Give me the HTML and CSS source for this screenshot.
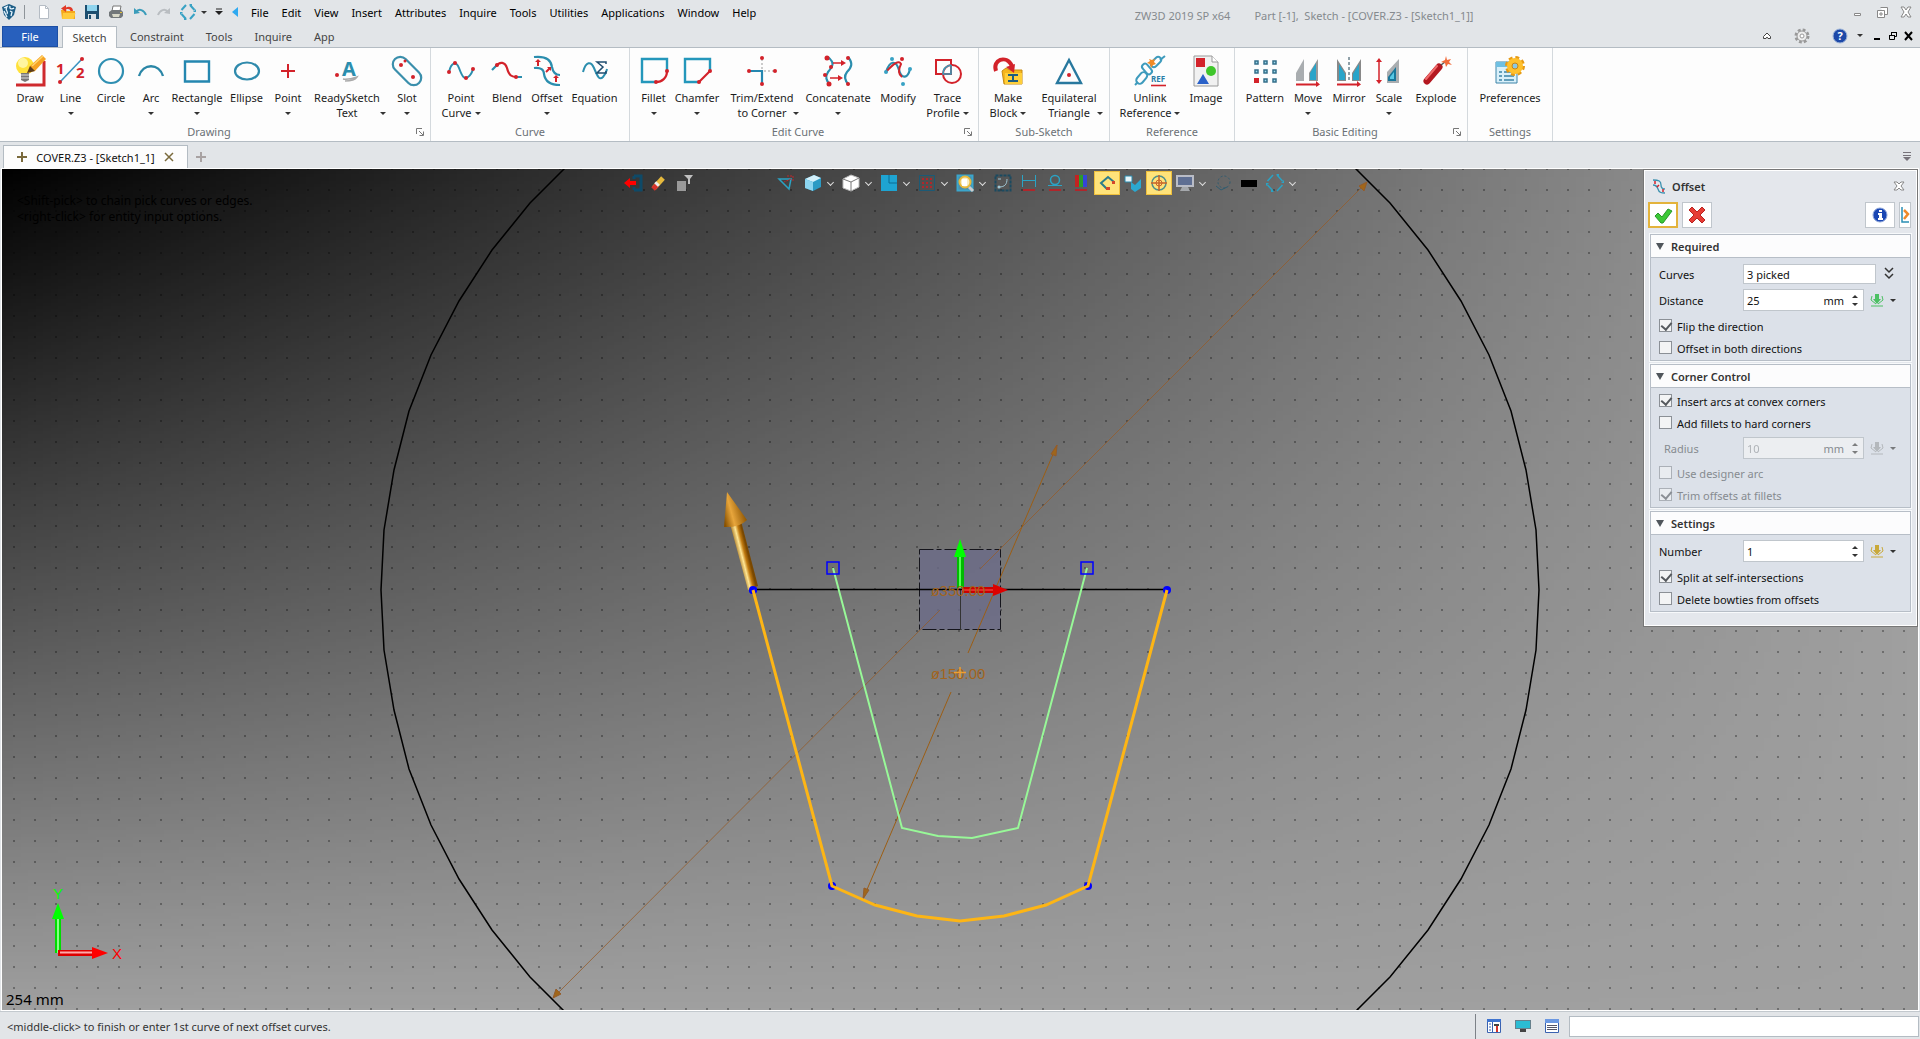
FILE: index.html
```html
<!DOCTYPE html>
<html lang="en">
<head>
    <meta charset="UTF-8">
    <meta name="viewport" content="width=device-width, initial-scale=1.0">
    <title>ZW3D 2019 SP x64</title>
    <link rel="stylesheet" href="styles.css">
</head>
<body>
    <!-- Title bar -->
    <header class="titlebar">
        <div class="quick">
            <span class="logo"><svg width="16" height="18" viewBox="0 0 16 18"><path d="M1 4l7-3 7 3-2 8-5 5-5-5z" fill="#1c5d86"/><path d="M3 5l4-2M6 4c-3 4 2 3 0 7M9 3c-1 4 3 3 4 2M9 8l2 1-1 4M3 8l3 6" stroke="#e8f6ff" stroke-width="1.3" fill="none"/></svg></span>
            <span class="divider"></span>
            <button class="qbtn" aria-label="New"><svg width="16" height="16"><path d="M3.500 1.500h6l3 3v10h-9z" fill="#fff" stroke="#b5bcc4"/><path d="M9.500 1.500v3h3" fill="none" stroke="#b5bcc4"/></svg></button>
            <button class="qbtn" aria-label="Open"><svg width="16" height="16"><path d="M1 6h5l1 1h8v8H2z" fill="#f5a81c"/><path d="M3 9h12.500l-2 6H2z" fill="#ffcb3d"/><path d="M13 7c0-4-4-5-7-3.500V1L1 4.500 6 8V5.500c3-1 4 0 4.500 1.500z" fill="#e23a28"/></svg></button>
            <button class="qbtn" aria-label="Save"><svg width="16" height="16"><path d="M1 1h14v14H1z" fill="#1d4f70"/><path d="M3 1h10v6H3z" fill="#8fd4ee"/><path d="M4 10h8v5H4z" fill="#d9e2e8"/><path d="M5 11h2v4H5z" fill="#1d4f70"/></svg></button>
            <button class="qbtn" aria-label="Print"><svg width="16" height="16"><path d="M5 2h8l-1 5H4z" fill="#fff" stroke="#777"/><path d="M1 8l3-2h9l2 2v4l-2 2H3l-2-2z" fill="#72777a"/><path d="M4 10h8l-1 3H5z" fill="#d8d8c8"/><path d="M12 8h2v1h-2z" fill="#e2c03a"/></svg></button>
            <button class="qbtn" aria-label="Undo"><svg width="16" height="16"><path d="M4 8c3-4 8-2 10 3" fill="none" stroke="#3a9cba" stroke-width="2"/><path d="M2 4v6l6-1z" fill="#3a9cba"/></svg></button>
            <button class="qbtn" aria-label="Redo"><svg width="16" height="16"><path d="M12 8C9 4 4 6 2 11" fill="none" stroke="#b9bdc1" stroke-width="2"/><path d="M14 4v6l-6-1z" fill="#b9bdc1"/></svg></button>
            <button class="qbtn" aria-label="Regenerate"><svg width="16" height="16"><path d="M6 1L1.500 6M10 1l4.500 5M14.500 10L10 15M6 15l-4.500-5" fill="none" stroke="#38a2c4" stroke-width="2"/><path d="M9 0h3v3zM16 5v3h-3zM7 16H4v-3zM0 11V8h3z" fill="#38a2c4"/></svg></button>
            <span class="caret"></span>
            <button class="qsmall" aria-label="Customize toolbar"><svg width="8" height="8"><path d="M1 1h6" stroke="#222" stroke-width="1"/><path d="M0 3h8L4 7z" fill="#222"/></svg></button>
            <button class="qsmall" aria-label="Collapse menu"><svg width="8" height="12"><path d="M7 1v10L1 6z" fill="#2fa9f0"/></svg></button>
        </div>
        <nav class="menu">
            <button>File</button><button>Edit</button><button>View</button><button>Insert</button><button>Attributes</button><button>Inquire</button><button>Tools</button><button>Utilities</button><button>Applications</button><button>Window</button><button>Help</button>
        </nav>
        <div class="title"><span>ZW3D 2019 SP x64</span><span>Part [-1],&nbsp; Sketch - [COVER.Z3 - [Sketch1_1]]</span></div>
        <div class="window-controls">
            <button aria-label="Minimize"><svg width="12" height="12"><path d="M2.500 7.500h6v2h-6z" fill="#fff" stroke="#888"/></svg></button>
            <button aria-label="Restore"><svg width="12" height="12"><path d="M4.500 1.500h7v7h-3M1.500 4.500h7v7h-7zM4 7h2v2H4z" fill="#fff" stroke="#888"/></svg></button>
            <button aria-label="Close"><svg width="12" height="12"><path d="M1 1h3l2 3 2-3h3L8 6l3 5H8L6 8l-2 3H1l3-5z" fill="#fff" stroke="#888"/></svg></button>
        </div>
    </header>

    <!-- Ribbon tabs -->
    <div class="tabs">
        <button class="tab tab-file">File</button>
        <button class="tab tab-active">Sketch</button>
        <button class="tab">Constraint</button>
        <button class="tab">Tools</button>
        <button class="tab">Inquire</button>
        <button class="tab">App</button>
        <div class="tab-tools">
            <button class="wide" aria-label="Minimize ribbon"><svg width="10" height="10"><path d="M1.500 5.500L5 2l3.500 3.500v2H6L5 6 4 7.500H1.500z" fill="#fff" stroke="#444"/></svg></button>
            <button class="wide" aria-label="Options"><svg width="16" height="16"><circle cx="8" cy="8" r="6" fill="none" stroke="#999" stroke-width="3" stroke-dasharray="2.700 2"/><circle cx="8" cy="8" r="5" fill="#eee" stroke="#999"/><circle cx="8" cy="8" r="2" fill="#fff" stroke="#999"/></svg></button>
            <button aria-label="Help"><svg width="16" height="16"><circle cx="8" cy="8" r="7" fill="#1d49a8" stroke="#9db4d9"/><text x="8" y="12" text-anchor="middle" class="help-mark">?</text></svg></button>
            <span class="caret"></span>
            <button aria-label="Minimize document"><svg width="10" height="10"><path d="M2 7h6v2H2z"/></svg></button>
            <button aria-label="Restore document"><svg width="10" height="10"><path d="M3.500 4V1.500h5v4H7M1.500 4.500h5v4h-5z" fill="none" stroke="#000"/><path d="M3 1h6v1H3zM1 4h6v1H1z"/></svg></button>
            <button aria-label="Close document"><svg width="10" height="10"><path d="M1 1l7 8M8 1L1 9" stroke="#000" stroke-width="2"/></svg></button>
        </div>
    </div>

    <!-- Ribbon -->
    <section class="ribbon">
        <div class="group with-launcher">
            <div class="tools tools-drawing">
                <button class="tool"><svg viewBox="0 0 32 32"><path d="M2 30h28V6" fill="none" stroke="#cf2a2e" stroke-width="3"/><circle cx="11" cy="11" r="9" fill="#ffe13a"/><circle cx="9" cy="8" r="5" fill="#fff5a0"/><path d="M7 18h8v7l-4 2-4-2z" fill="#777"/><path d="M7 20h8M7 23h8" stroke="#ddd"/><path d="M13 18l3-7L28 0l4 4-11 12z" fill="#f6a223"/><path d="M13 18l3-7 5 5z" fill="#5b3c1d"/><path d="M18 11L29 1" stroke="#ffd56c" stroke-width="1.500"/></svg><span>Draw</span></button>
                <button class="tool"><svg viewBox="0 0 32 32"><path d="M5 27L27 4" stroke="#3a93c0" stroke-width="1.600"/><circle cx="5" cy="27" r="2" fill="#d3222a"/><circle cx="27" cy="4" r="2" fill="#d3222a"/><text x="1" y="19" class="digit">1</text><text x="21" y="23" class="digit">2</text></svg><span>Line</span><i class="caret"></i></button>
                <button class="tool"><svg viewBox="0 0 32 32"><circle cx="16" cy="16" r="12" fill="none" stroke="#2f8fb2" stroke-width="2.200"/></svg><span>Circle</span></button>
                <button class="tool"><svg viewBox="0 0 32 32"><path d="M4 21c4-13 20-13 24 0" fill="none" stroke="#2a86a6" stroke-width="2.400"/></svg><span>Arc</span><i class="caret"></i></button>
                <button class="tool"><svg viewBox="0 0 32 32"><path d="M4 6.500h24v20H4z" fill="none" stroke="#2487b0" stroke-width="2.400"/></svg><span>Rectangle</span><i class="caret"></i></button>
                <button class="tool"><svg viewBox="0 0 32 32"><ellipse cx="16" cy="16" rx="12" ry="8.500" fill="none" stroke="#2f8aac" stroke-width="2.200"/></svg><span>Ellipse</span></button>
                <button class="tool"><svg viewBox="0 0 32 32"><path d="M9 16h14M16 9v14" stroke="#d3222a" stroke-width="2"/></svg><span>Point</span><i class="caret"></i></button>
                <button class="tool"><svg viewBox="0 0 32 32"><circle cx="6" cy="20" r="2" fill="#d3222a"/><text x="11" y="21" class="letter">A</text><path d="M12 24c5 1 8 0 14-2-2 3-8 4-12 4" fill="none" stroke="#aaa" stroke-width="1.500"/></svg><span>ReadySketch</span><span>Text</span><i class="caret side"></i></button>
                <button class="tool"><svg viewBox="0 0 32 32"><rect x="-1" y="8.500" width="34" height="15" rx="7.500" transform="rotate(45 16 16)" fill="none" stroke="#3a8fac" stroke-width="2.200"/><circle cx="10" cy="10" r="2" fill="#d3222a"/><circle cx="14" cy="6" r="1.500" fill="#d3222a"/><circle cx="22" cy="22" r="2" fill="#d3222a"/></svg><span>Slot</span><i class="caret"></i></button>
            </div>
            <div class="group-name">Drawing</div>
            <button class="launcher" aria-label="Drawing options"><svg width="8" height="8"><path d="M.500 6V.500H6M3 3l4 4M7.500 3.500v4h-4" fill="none" stroke="#777"/></svg></button>
        </div>
        <div class="group">
            <div class="tools tools-curve">
                <button class="tool"><svg viewBox="0 0 32 32"><path d="M4 17C6 8 11 5 14 13s5 12 9 9c3-2 4-4 5-8" fill="none" stroke="#2b8eae" stroke-width="2"/><circle cx="4" cy="17" r="2" fill="#d3222a"/><circle cx="10" cy="8" r="2" fill="#d3222a"/><circle cx="21" cy="23" r="2" fill="#d3222a"/><circle cx="28" cy="14" r="2" fill="#d3222a"/></svg><span>Point</span><span>Curve<i class="caret inline"></i></span></button>
                <button class="tool"><svg viewBox="0 0 32 32"><path d="M1 15l5-5M25 22h6" stroke="#2b8eae" stroke-width="2.200"/><path d="M5 11c4-5 9-4 11 2 2 8 5 9 10 9" fill="none" stroke="#d3222a" stroke-width="2.200"/><circle cx="6" cy="10" r="2" fill="#d3222a"/><circle cx="25" cy="22" r="2" fill="#d3222a"/></svg><span>Blend</span></button>
                <button class="tool"><svg viewBox="0 0 32 32"><path d="M3 2c10-1 17 2 18 10 1 6 4 8 8 8M3 13c7-1 10 2 10 6 1 7 6 11 16 11" fill="none" stroke="#2b8eae" stroke-width="2.200"/><path d="M7 11V6M15 17l4-4M25 27v-5" stroke="#d3222a" stroke-width="2"/><path d="M4 7l3-3 3 3zM22 23l3-3 3 3zM16 12h4v4z" fill="#d3222a"/></svg><span>Offset</span><i class="caret"></i></button>
                <button class="tool"><svg viewBox="0 0 32 32"><path d="M4 17C7 6 12 6 15 13s5 13 9 9c3-3 3-4 4-8" fill="none" stroke="#2b8eae" stroke-width="2"/><path d="M27 9V7h-9l6 5-6 6h9v-2" fill="none" stroke="#1f4d70" stroke-width="1.500"/></svg><span>Equation</span></button>
            </div>
            <div class="group-name">Curve</div>
        </div>
        <div class="group with-launcher">
            <div class="tools tools-edit">
                <button class="tool"><svg viewBox="0 0 32 32"><path d="M29 15V4H4v23h14" fill="none" stroke="#2497bb" stroke-width="2.400"/><path d="M29 16c0 7-5 11-11 11" fill="none" stroke="#d3222a" stroke-width="2.200"/><circle cx="29" cy="16" r="2" fill="#d3222a"/><circle cx="18" cy="27" r="2" fill="#d3222a"/></svg><span>Fillet</span><i class="caret"></i></button>
                <button class="tool"><svg viewBox="0 0 32 32"><path d="M29 15V4H4v23h14" fill="none" stroke="#2497bb" stroke-width="2.400"/><path d="M29 16L18 27" stroke="#d3222a" stroke-width="2.200"/><circle cx="29" cy="16" r="2" fill="#d3222a"/><circle cx="18" cy="27" r="2" fill="#d3222a"/></svg><span>Chamfer</span><i class="caret"></i></button>
                <button class="tool"><svg viewBox="0 0 32 32"><path d="M4 16h12v12" fill="none" stroke="#2487b0" stroke-width="2.200"/><path d="M16 14V4M18 16h10" stroke="#bbb" stroke-width="1.500" stroke-dasharray="2 2"/><circle cx="3" cy="16" r="2" fill="#d3222a"/><circle cx="16" cy="3" r="2" fill="#d3222a"/><circle cx="29" cy="16" r="2" fill="#d3222a"/><circle cx="16" cy="29" r="2" fill="#d3222a"/></svg><span>Trim/Extend</span><span>to Corner</span><i class="caret side"></i></button>
                <button class="tool"><svg viewBox="0 0 32 32"><path d="M6 2c7 6 5 9 0 15-3 5-2 8 2 13M26 2c5 6 4 10-1 15-4 5-2 9 2 13" fill="none" stroke="#2b8eae" stroke-width="2.200"/><path d="M11 8h9M8 23h9" stroke="#d3222a" stroke-width="1.600"/><path d="M19 5l5 3-5 3zM16 20l5 3-5 3z" fill="#d3222a"/><circle cx="5" cy="3" r="2.500" fill="#d3222a"/><circle cx="9" cy="12" r="2" fill="#d3222a"/><circle cx="3" cy="20" r="2" fill="#d3222a"/><circle cx="7" cy="29" r="2.500" fill="#d3222a"/><circle cx="26" cy="3" r="2" fill="#d3222a"/><circle cx="26" cy="29" r="2" fill="#d3222a"/></svg><span>Concatenate</span><i class="caret"></i></button>
                <button class="tool"><svg viewBox="0 0 32 32"><path d="M4 17c4-12 10-12 13-2s9 8 11-1" fill="none" stroke="#2b8eae" stroke-width="2.200"/><path d="M4 17c8-9 13-12 15-8-3 6-3 10 1 13" fill="none" stroke="#d3222a" stroke-width="2"/><circle cx="4" cy="17" r="2" fill="#38a2c4"/><circle cx="10" cy="4" r="2" fill="#38a2c4"/><circle cx="21" cy="29" r="2" fill="#38a2c4"/><circle cx="28" cy="14" r="2" fill="#38a2c4"/><circle cx="20" cy="4" r="2" fill="#d3222a"/></svg><span>Modify</span></button>
                <button class="tool"><svg viewBox="0 0 32 32"><path d="M4 5h15v14H4z" fill="none" stroke="#d3222a" stroke-width="2"/><circle cx="20" cy="19" r="9" fill="none" stroke="#d3222a" stroke-width="2"/><path d="M19 10v9h-8c0-5 3-8 8-9" fill="none" stroke="#3a9cba" stroke-width="1.600"/></svg><span>Trace</span><span>Profile<i class="caret inline"></i></span></button>
            </div>
            <div class="group-name">Edit Curve</div>
            <button class="launcher" aria-label="Edit curve options"><svg width="8" height="8"><path d="M.500 6V.500H6M3 3l4 4M7.500 3.500v4h-4" fill="none" stroke="#777"/></svg></button>
        </div>
        <div class="group">
            <div class="tools tools-block">
                <button class="tool"><svg viewBox="0 0 32 32"><path d="M10 16l4-3 4 2h12v14H12z" fill="#f6b51d" stroke="#c68a12"/><path d="M13 18h17v11H13z" fill="#ffcf3a"/><path d="M16 20h10M16 26h10M21 20v6" stroke="#1f5d80" stroke-width="2"/><path d="M4 16C0 5 14-1 20 11" fill="none" stroke="#d3222a" stroke-width="4"/><path d="M14 12l9-3-1 9z" fill="#d3222a"/></svg><span>Make</span><span>Block<i class="caret inline"></i></span></button>
                <button class="tool"><svg viewBox="0 0 32 32"><path d="M16 5l12 23H4z" fill="none" stroke="#28789e" stroke-width="2.400"/><circle cx="16" cy="20" r="2" fill="#d3222a"/></svg><span>Equilateral</span><span>Triangle</span><i class="caret side"></i></button>
            </div>
            <div class="group-name">Sub-Sketch</div>
        </div>
        <div class="group">
            <div class="tools tools-reference">
                <button class="tool"><svg viewBox="0 0 32 32"><g fill="none" stroke="#3e9bbd" stroke-width="2"><rect x="1" y="20" width="13" height="7" rx="3.500" transform="rotate(-50 7 23)"/><rect x="7" y="11" width="12" height="6" rx="3" transform="rotate(50 13 14)"/><rect x="16" y="4" width="12" height="6" rx="3" transform="rotate(-45 22 7)"/><path d="M26 5l5-4M1 30l3-3"/></g><path d="M15 4l3 1 3-1-1 3 2 2-3 1-2 3-1-4-3-1 3-2z" fill="#f28a25"/><text x="17" y="27" class="ref">REF</text><path d="M17 30.500h15" stroke="#d3222a" stroke-width="1.600"/></svg><span>Unlink</span><span>Reference<i class="caret inline"></i></span></button>
                <button class="tool"><svg viewBox="0 0 32 32"><path d="M4 1h18l6 6v24H4z" fill="#f1f1f1" stroke="#999"/><path d="M22 1v6h6" fill="#fff" stroke="#999"/><path d="M6 3h9v9H6z" fill="#d3222a"/><circle cx="21" cy="16" r="5" fill="#3fc62b"/><path d="M13 19l6 10H7z" fill="#2b62c9"/></svg><span>Image</span></button>
            </div>
            <div class="group-name">Reference</div>
        </div>
        <div class="group with-launcher">
            <div class="tools tools-basic">
                <button class="tool"><svg viewBox="0 0 32 32"><g fill="#9fdcef" stroke="#356f8a" stroke-width="1.500"><path d="M6 6h3v3H6zM15 6h3v3h-3zM24 6h3v3h-3zM6 15h3v3H6zM15 15h3v3h-3zM24 15h3v3h-3zM15 24h3v3h-3zM24 24h3v3h-3z"/></g><path d="M5 23h5v5H5z" fill="#d3222a"/></svg><span>Pattern</span></button>
                <button class="tool"><svg viewBox="0 0 32 32"><path d="M4 26V18L12 4v22z" fill="#a9adb0"/><path d="M17 26V18l9-14v22z" fill="#999"/><path d="M18 25v-7l6-10v17z" fill="#29a4c9"/><path d="M4 29.500h22" stroke="#d3222a" stroke-width="2"/><path d="M24 26l4 3.500-4 2.500z" fill="#d3222a"/></svg><span>Move</span><i class="caret"></i></button>
                <button class="tool"><svg viewBox="0 0 32 32"><path d="M4 26V4l9 14v8zM28 26V4l-9 14v8z" fill="#888"/><path d="M6 25V9l6 10v6zM26 25V9l-6 10v6z" fill="#29a4c9"/><path d="M16 2v24" stroke="#245" stroke-dasharray="3 2"/><path d="M4 29.500h22" stroke="#d3222a" stroke-width="2"/><path d="M24 26l4 3.500-4 2.500z" fill="#d3222a"/></svg><span>Mirror</span></button>
                <button class="tool"><svg viewBox="0 0 32 32"><path d="M6 5v21" stroke="#d3222a" stroke-width="1.500"/><path d="M3 7l3-4 3 4zM3 25l3 4 3-4z" fill="#d3222a"/><path d="M14 28V17L26 4v24z" fill="#a9adb0"/><path d="M15 26v-4l8-10v14z" fill="#18779b"/><path d="M17 24v-2l4-5v7z" fill="#57c8e5"/></svg><span>Scale</span><i class="caret"></i></button>
                <button class="tool"><svg viewBox="0 0 32 32"><path d="M7 26L19 12" stroke="#b41820" stroke-width="7" stroke-linecap="round"/><path d="M6 24L17 11" stroke="#f06a6a" stroke-width="2" stroke-linecap="round"/><path d="M21 10l4-3" stroke="#555" stroke-width="1.500"/><path d="M26 1l1 4 4-1-2 3 3 3-4-1-2 3-1-4-4-1 4-2z" fill="#f26b3a"/></svg><span>Explode</span></button>
            </div>
            <div class="group-name">Basic Editing</div>
            <button class="launcher" aria-label="Basic editing options"><svg width="8" height="8"><path d="M.500 6V.500H6M3 3l4 4M7.500 3.500v4h-4" fill="none" stroke="#777"/></svg></button>
        </div>
        <div class="group">
            <div class="tools tools-settings">
                <button class="tool"><svg viewBox="0 0 32 32"><path d="M2 7h21v21H2z" fill="#d9f0fa" stroke="#3d84a8"/><path d="M2 7h21v5H2z" fill="#6fc0e2"/><path d="M5 17h3M10 17h10M5 21h3M10 21h10M5 25h3M10 25h10" stroke="#3d84a8" stroke-width="1.500"/><circle cx="21" cy="11" r="8" fill="none" stroke="#e69a14" stroke-width="4" stroke-dasharray="3.600 2.700"/><circle cx="21" cy="11" r="5.500" fill="none" stroke="#ffc02c" stroke-width="5"/><circle cx="21" cy="11" r="3" fill="#8cc8e0" stroke="#c98512"/></svg><span>Preferences</span></button>
            </div>
            <div class="group-name">Settings</div>
        </div>
    </section>

    <!-- Document tabs -->
    <div class="doc-tabs">
        <button class="doc-tab"><svg width="10" height="10"><path d="M0 5h10M5 0v10" stroke="#7a6a3c" stroke-width="2"/></svg>COVER.Z3 - [Sketch1_1]<svg width="10" height="10"><path d="M1 1l8 8M9 1L1 9" stroke="#7a6a3c" stroke-width="1.500"/></svg></button>
        <button class="doc-add" aria-label="New tab"><svg width="10" height="10"><path d="M0 5h10M5 0v10" stroke="#a8a2a2" stroke-width="2"/></svg></button>
        <button class="doc-list" aria-label="Tab list"><svg width="10" height="10"><path d="M1 .500h8M1 3.500h8" stroke="#77737a"/><path d="M1 5h8L5 9z" fill="#77737a"/></svg></button>
    </div>

    <!-- Sketch canvas -->
    <main class="canvas">
        <div class="shade"></div>
        <svg class="drawing" viewBox="2 169 1916 841" preserveAspectRatio="xMidYMid slice">
            <defs>
                <pattern id="grid" x="3" y="11" width="21" height="21" patternUnits="userSpaceOnUse"><rect x="10" y="10" width="2" height="2" fill="#000" opacity=".3"/></pattern>
                <linearGradient id="shaft" gradientUnits="userSpaceOnUse" x1="736" y1="557" x2="748" y2="554"><stop offset="0" stop-color="#8a5200"/><stop offset=".5" stop-color="#ffe694"/><stop offset=".75" stop-color="#c07a10"/><stop offset="1" stop-color="#7a4800"/></linearGradient>
                <linearGradient id="head" gradientUnits="userSpaceOnUse" x1="724" y1="520" x2="746" y2="514"><stop offset="0" stop-color="#8a5200"/><stop offset=".4" stop-color="#e8a63c"/><stop offset="1" stop-color="#8a5200"/></linearGradient>
            </defs>
            <rect x="2" y="169" width="1916" height="841" fill="url(#grid)"/>
            <g fill="none" stroke="#000" stroke-width="1.500">
                <path d="M1347 160L1390 203L1428 250L1461 301L1489 355L1511 411L1526 470L1536 530L1539 590L1536 650L1526 710L1511 769L1489 825L1461 879L1428 930L1390 977L1347 1020"/>
                <path d="M573 160L530 203L492 250L459 301L431 355L409 411L394 470L384 530L381 590L384 650L394 710L409 769L431 825L459 879L492 930L530 977L573 1020"/>
            </g>
            <!-- construction plane -->
            <rect x="919.500" y="549.500" width="81" height="80" fill="#6c6b88" fill-opacity=".8" stroke="#15151c" stroke-dasharray="14 3 5 3"/>
            <path d="M960.500 590v40" stroke="#333"/>
            <path d="M753 589.500h414" stroke="#000" stroke-width="1.500"/>
            <!-- diameter dimensions -->
            <g stroke="#935c2c">
                <path d="M1367 182L980 569M940 610L553 998" stroke-opacity=".8"/>
                <path d="M1057 445L968 653M951 692L863 899" stroke="#9c5e14"/>
                <path d="M1367 182l-3 9-5-5zM553 998l3-9 5 5zM1057 445l-1 11-5-2zM863 899l1-11 5 2z" fill="#a0661a"/>
            </g>
            <!-- origin axes -->
            <path d="M957 588v-32h7v32z" fill="#0b0"/><path d="M960 588v-32" stroke="#5f5" stroke-width="2"/><path d="M960 539l6 18h-12z" fill="#0f0"/>
            <path d="M962 587h32v6h-32z" fill="#c00"/><path d="M962 590h32" stroke="#f55"/><path d="M1008 590l-15 6v-12z" fill="#d00"/>
            <g class="dim">
                <text x="931" y="596"><tspan class="dia">ø</tspan>350.00</text>
                <text x="931" y="679"><tspan class="dia">ø</tspan>150.00</text>
            </g>
            <path d="M954 672.500h12M960 667v11" stroke="#f0a030" stroke-width="1.500"/>
            <!-- offset result -->
            <path d="M833 568L902 828L938 836L972 838L1018 828L1087 568" fill="none" stroke="#98f898" stroke-width="2"/>
            <g fill="none" stroke="#00f" stroke-width="1.500"><rect x="827" y="562" width="12" height="12"/><rect x="1081" y="562" width="12" height="12"/></g>
            <!-- picked curves and direction arrow -->
            <g fill="#00f"><circle cx="753" cy="590" r="4"/><circle cx="1167" cy="590" r="4"/><circle cx="832" cy="886" r="4"/><circle cx="1088" cy="886" r="4"/></g>
            <path d="M730 524l11-3 17 65-10 4z" fill="url(#shaft)"/>
            <path d="M727 492l20 28q-8 8-23 7z" fill="url(#head)"/>
            <circle cx="753" cy="590" r="4" fill="#00f"/>
            <path d="M753 590L832 886L875 905L917 916L960 921L1004 916L1046 905L1088 886L1167 590" fill="none" stroke="#fdb515" stroke-width="3"/>
            <!-- view triad -->
            <path d="M55 953v-38h6v38z" fill="#0d0"/><path d="M58 953v-38" stroke="#8f8" stroke-width="2"/><path d="M58 903l6 16H52z" fill="#0f0"/>
            <path d="M58 950h36v6H58z" fill="#d00"/><path d="M60 952.500h34" stroke="#faa" stroke-width="2"/><path d="M108 953l-16 6v-12z" fill="#f00"/>
            <text x="58" y="899" class="axis" fill="#0f0">Y</text>
            <text x="117" y="959" class="axis" fill="#f00">X</text>
        </svg>
        <p class="hint">&lt;Shift-pick&gt; to chain pick curves or edges.<br>&lt;right-click&gt; for entity input options.</p>
        <div class="scale">254 mm</div>

        <div class="view-bar">
            <button aria-label="Exit sketch"><svg width="18" height="18"><path d="M10 2h7v14h-7M10 2v3M10 16v-3" fill="none" stroke="#0e4a68" stroke-width="3"/><path d="M0 9l6-5v3h6v4H6v3z" fill="#f00"/></svg></button>
            <button aria-label="Erase"><svg width="18" height="18"><path d="M4 14l9-10" stroke="#e5b93d" stroke-width="5"/><path d="M3 15l4-4" stroke="#d6332b" stroke-width="5"/><path d="M6 11l2-2" stroke="#eee" stroke-width="5"/></svg></button>
            <button aria-label="Filter"><svg width="18" height="18"><path d="M1 7h9v10H1z" fill="#9a9a9a"/><path d="M8 1h9l-3 4v5h-2V5z" fill="#c0c0c0"/></svg></button>
            <span class="view-gap"></span>
            <button aria-label="Sketch plane"><svg width="18" height="18"><path d="M1 5h12L11 15z" fill="none" stroke="#2ba3c4" stroke-width="1.500"/><path d="M9 2h6v5M13 5l-7 3" fill="none" stroke="#c0262b" stroke-dasharray="2 1"/></svg></button>
            <button aria-label="Shaded"><svg width="18" height="18"><path d="M1 5l9-4 7 3v9l-8 4-8-3z" fill="#2b9ac4"/><path d="M1 5l9-4 7 3-8 4z" fill="#d3f0fb"/><path d="M1 5l8 3v9l-8-3z" fill="#8bd4ef"/></svg></button><i class="chev"></i>
            <button aria-label="Display mode"><svg width="18" height="18"><path d="M1 5l8-4 8 3v9l-8 4-8-3z" fill="#fff" stroke="#bbb"/><path d="M1 5l8 3 8-4M9 8v9" fill="none" stroke="#777"/></svg></button><i class="chev"></i>
            <button aria-label="Section view"><svg width="18" height="18"><path d="M1 1h16v16H1z" fill="#1ea4d2"/><path d="M9 1v8h8" fill="none" stroke="#0b6d94"/></svg></button><i class="chev"></i>
            <button aria-label="Grid"><svg width="18" height="18"><path d="M1.500 1.500h15v15h-15z" fill="none" stroke="#1b5a76"/><path d="M4 5h10M4 9h10M4 13h10" stroke="#b0262b" stroke-width="2" stroke-dasharray="2 2"/></svg></button><i class="chev"></i>
            <button aria-label="Zoom"><svg width="18" height="18"><path d="M1.500 1.500h15v15h-15z" fill="#4f8fa8" stroke="#3ba6cc" stroke-width="2"/><circle cx="9" cy="8" r="5.500" fill="#f8edc4" stroke="#e8b83a" stroke-width="2"/><path d="M13 13l4 4" stroke="#ccc" stroke-width="3"/><path d="M6 5h5v7H6z" fill="#fff"/></svg></button><i class="chev"></i>
            <button aria-label="Fit"><svg width="18" height="18"><path d="M1.500 1.500h15v15h-15z" fill="none" stroke="#1b4a60" stroke-width="2" stroke-dasharray="3 1"/><path d="M5 13c6 0 8-3 8-8M4 5h3" fill="none" stroke="#9fc6d4"/><circle cx="5" cy="13" r="1.500" fill="#9fc6d4"/></svg></button>
            <button aria-label="Linear dimension"><svg width="18" height="18"><path d="M2.500 1v12M15.500 1v12M3 6.500h12" stroke="#2ba3c4" fill="none"/><path d="M3 16h12" stroke="#b0262b" stroke-width="2"/></svg></button>
            <button aria-label="Radial dimension"><svg width="18" height="18"><circle cx="9" cy="6" r="4.500" fill="none" stroke="#2ba3c4" stroke-width="1.500"/><path d="M2 11.500h14" stroke="#2ba3c4"/><path d="M3 16h12" stroke="#b0262b" stroke-width="2"/></svg></button>
            <button aria-label="Colors"><svg width="18" height="18"><path d="M3 1h4v12H3z" fill="#c32222"/><path d="M7 1h4v12H7z" fill="#2c9c2c"/><path d="M11 1h4v12h-4z" fill="#3545d8"/><path d="M3 16h12" stroke="#b0262b" stroke-width="2"/></svg></button>
            <button class="on" aria-label="Open ends"><svg width="18" height="18"><path d="M9 15L3 9l7-6 6 5" fill="none" stroke="#2d7c8a" stroke-width="2"/><path d="M8 13h4v3H8zM14 7h3v3h-3z" fill="#d3462a"/></svg></button>
            <button aria-label="View plane"><svg width="18" height="18"><path d="M1 2h7v6H1z" fill="#e6f5fb" stroke="#2b88aa"/><path d="M7 8l4 3 6-6v9l-6 4-4-3z" fill="#2ba8d0"/></svg></button>
            <button class="on" aria-label="Origin"><svg width="18" height="18"><circle cx="9" cy="9" r="7" fill="none" stroke="#51908a" stroke-width="1.500"/><path d="M9 1v16M1 9h16" stroke="#c8642a" stroke-width="1.500"/><circle cx="9" cy="9" r="3" fill="none" stroke="#c8642a"/></svg></button>
            <button aria-label="Screen"><svg width="18" height="18"><path d="M0 1h18v12H0z" fill="#b9bcc6"/><path d="M2 3h14v8H2z" fill="#5f6f93"/><path d="M6 13h6l2 4H4z" fill="#a5a8ac"/></svg></button><i class="chev"></i>
            <button aria-label="Layers"><svg width="18" height="18"><circle cx="10" cy="8" r="6" fill="none" stroke="#2f5c70" stroke-dasharray="2 2"/><path d="M2 12l5 4 6-3" fill="none" stroke="#2f5c70"/></svg></button>
            <button aria-label="Line color"><svg width="18" height="18"><path d="M1 6h16v7H1z"/></svg></button>
            <button aria-label="Rotate"><svg width="18" height="18"><path d="M7 1L1.500 7M11 1l5.500 6M16.500 11L11 17M7 17l-5.500-6" fill="none" stroke="#2ba3c4" stroke-width="1.500"/><path d="M10 0h3v3zM18 6v3h-3zM8 18H5v-3zM0 12V9h3z" fill="#2ba3c4"/></svg></button><i class="chev"></i>
        </div>

        <!-- Offset form -->
        <aside class="panel">
            <div class="panel-title">
                <svg width="14" height="16"><path d="M1 2c6 0 8 1 8 5 0 3 2 4 4 4M1 7c3 0 4 1 5 4 1 4 4 4 7 4" fill="none" stroke="#3a8fae" stroke-width="1.300"/><path d="M3 3v3M7 7L5 9M11 11v3" stroke="#d3222a" stroke-width="1.500"/></svg>
                <h2>Offset</h2>
                <button aria-label="Close form"><svg width="12" height="12"><path d="M1 2h3l2 2 2-2h3L8 6l3 4H8L6 8l-2 2H1l3-4z" fill="#fff" stroke="#888"/></svg></button>
            </div>
            <div class="panel-actions">
                <button class="act ok" aria-label="OK"><svg width="18" height="18"><path d="M1 10l3-3 4 4 6-8 4 2-9 12H7z" fill="#3cc936" stroke="#28962b"/></svg></button>
                <button class="act" aria-label="Cancel"><svg width="18" height="18"><path d="M1 4l3-3 5 5 5-5 3 3-5 5 5 5-3 3-5-5-5 5-3-3 5-5z" fill="#e63c35" stroke="#b9221f"/></svg></button>
                <button class="act info" aria-label="Information"><svg width="16" height="16"><circle cx="8" cy="8" r="7" fill="#1a47b4" stroke="#8ea6da"/><path d="M7 3h3v2H7zM6 6h4v5h1v2H6v-2h1V8H6z" fill="#fff"/></svg></button>
                <button class="act narrow" aria-label="More"><svg width="8" height="16"><path d="M1 0v15h7" fill="none" stroke="#2a8fb4" stroke-width="1.500"/><path d="M3 3l4 4-4 5" fill="none" stroke="#f08a2a" stroke-width="2.500"/></svg></button>
            </div>
            <section class="block">
                <h3>Required</h3>
                <div class="fields">
                    <div class="row"><label for="curves">Curves</label><input class="long" id="curves" value="3 picked"><button class="more" aria-label="Expand list"><svg width="12" height="14"><path d="M2 1l4 4 4-4M2 7l4 4 4-4" fill="none" stroke="#333" stroke-width="1.500"/></svg></button></div>
                    <div class="row"><label for="distance">Distance</label><span class="spin"><input id="distance" value="25"><span>mm</span><span class="arrows"></span></span><button class="down green" aria-label="Distance options"><svg width="14" height="14"><path d="M5 1h4v5h2l-4 5-4-5h2z" fill="currentColor"/><path d="M2 3L1 7l5 4M12 3l1 4-5 4M1 13h12" fill="none" stroke="currentColor"/></svg><i class="caret"></i></button></div>
                    <div class="checks">
                        <label><input type="checkbox" checked>Flip the direction</label>
                        <label><input type="checkbox">Offset in both directions</label>
                    </div>
                </div>
            </section>
            <section class="block">
                <h3>Corner Control</h3>
                <div class="fields tight">
                    <div class="checks">
                        <label><input type="checkbox" checked>Insert arcs at convex corners</label>
                        <label><input type="checkbox">Add fillets to hard corners</label>
                    </div>
                    <div class="row off"><label for="radius" class="indent">Radius</label><span class="spin"><input id="radius" value="10" disabled><span>mm</span><span class="arrows"></span></span><button class="down" aria-label="Radius options" disabled><svg width="14" height="14"><path d="M5 1h4v5h2l-4 5-4-5h2z" fill="currentColor"/><path d="M2 3L1 7l5 4M12 3l1 4-5 4M1 13h12" fill="none" stroke="currentColor"/></svg><i class="caret"></i></button></div>
                    <div class="checks off">
                        <label><input type="checkbox" disabled>Use designer arc</label>
                        <label><input type="checkbox" checked disabled>Trim offsets at fillets</label>
                    </div>
                </div>
            </section>
            <section class="block">
                <h3>Settings</h3>
                <div class="fields">
                    <div class="row"><label for="number">Number</label><span class="spin"><input id="number" value="1"><span class="arrows"></span></span><button class="down yellow" aria-label="Number options"><svg width="14" height="14"><path d="M5 1h4v5h2l-4 5-4-5h2z" fill="currentColor"/><path d="M2 3L1 7l5 4M12 3l1 4-5 4M1 13h12" fill="none" stroke="currentColor"/></svg><i class="caret"></i></button></div>
                    <div class="checks">
                        <label><input type="checkbox" checked>Split at self-intersections</label>
                        <label><input type="checkbox">Delete bowties from offsets</label>
                    </div>
                </div>
            </section>
        </aside>
    </main>

    <!-- Status bar -->
    <footer class="status">
        <span class="prompt">&lt;middle-click&gt; to finish or enter 1st curve of next offset curves.</span>
        <div class="status-tools">
            <button aria-label="Manager"><svg width="14" height="14"><path d="M.500.500h13v13H.500z" fill="#fff" stroke="#3a62b0"/><path d="M0 0h14v3H0z" fill="#3f74cf"/><path d="M2 5h2M2 8h2M2 11h2M5.500 3v10" stroke="#3a62b0"/><path d="M7 5h5v2H7z" fill="#444"/><path d="M9 7h2v6H9z" fill="#d6332b"/></svg></button>
            <button aria-label="Output"><svg width="16" height="14"><path d="M0 1h16v9H0z" fill="#66808c"/><path d="M1 2h14v7H1z" fill="#2bbcd4"/><path d="M5 10h6v3H5z" fill="#444"/></svg></button>
            <button aria-label="Messages"><svg width="14" height="14"><path d="M.500.500h13v13H.500z" fill="#fff" stroke="#3a62b0"/><path d="M0 0h14v4H0z" fill="#6b98e2"/><path d="M2 6.500h10M2 8.500h10M2 10.500h10" stroke="#556"/></svg></button>
            <input aria-label="Command">
        </div>
    </footer>
</body>
</html>
```
FILE: styles.css
```css
* {
    box-sizing: border-box;
}
body {
    margin: 0;
    height: 100vh;
    display: flex;
    flex-direction: column;
    overflow: hidden;
    background: #e2e5e8;
    font-family: "Noto Sans", "Open Sans", sans-serif;
    font-size: 11px;
    line-height: 15px;
    color: #1c1c1c;
}
button, input {
    font: inherit;
    color: inherit;
}
button {
    background: none;
    border: none;
    padding: 0;
}
svg {
    display: block;
    flex: none;
    overflow: visible;
}
.caret {
    display: block;
    width: 0;
    height: 0;
    border: 3px solid transparent;
    border-top-color: #333;
    border-bottom: none;
}

/* Title bar */
.titlebar {
    height: 24px;
    display: flex;
    align-items: center;
}
.quick {
    display: flex;
    align-items: center;
    width: 251px;
    height: 20px;
}
.logo {
    padding-left: 1px;
    width: 24px;
}
.divider {
    width: 8px;
    height: 14px;
    border-left: 1px solid #8e9499;
}
.qbtn {
    width: 24px;
    display: flex;
    justify-content: center;
}
.qsmall {
    width: 16px;
    display: flex;
    justify-content: center;
}
.quick .caret {
    margin: 0 4px 0 1px;
}
.menu {
    display: flex;
    gap: 13px;
    color: #000;
}
.title {
    flex: 1;
    display: flex;
    justify-content: center;
    gap: 24px;
    padding-top: 6px;
    color: #858a8e;
}
.window-controls {
    display: flex;
    gap: 12px;
    padding-right: 8px;
}

/* Ribbon tabs */
.tabs {
    height: 24px;
    display: flex;
    align-items: flex-end;
    padding-left: 2px;
    border-bottom: 1px solid #b4bcc3;
    color: #444;
}
.tab {
    height: 21px;
    padding: 0 11px;
}
.tab-file {
    width: 56px;
    margin-right: 4px;
    background: #2860bd;
    border: 1px solid #1c4fa5;
    color: #fff;
}
.tab-active {
    width: 55px;
    height: 22px;
    margin: 0 2px -1px 0;
    padding: 0;
    background: #fdfdfd;
    border: 1px solid #b4bcc3;
    border-bottom: none;
}
.tab-tools {
    margin-left: auto;
    display: flex;
    align-items: center;
    gap: 6px;
    height: 23px;
    padding-right: 6px;
}
.tab-tools .wide {
    margin-right: 16px;
}
.tab-tools .caret {
    margin: 0 3px;
}
.help-mark {
    font-size: 11px;
    font-weight: bold;
    fill: #fff;
}

/* Ribbon */
.ribbon {
    height: 94px;
    display: flex;
    background: #fdfdfd;
    border-bottom: 1px solid #b4bcc3;
}
.group {
    position: relative;
    display: flex;
    flex-direction: column;
    padding: 7px 4px 0;
    border-right: 1px solid #d4d9dd;
}
.tools {
    display: grid;
    flex: 1;
}
.tools-drawing {
    padding-left: 6px;
    grid-template-columns: 40px 41px 40px 40px 52px 47px 36px 82px 38px;
}
.tools-curve {
    padding-left: 3px;
    grid-template-columns: 46px 46px 34px 61px;
}
.tools-edit {
    padding-left: 2px;
    grid-template-columns: 35px 52px 78px 74px 46px 53px;
}
.tools-block {
    grid-template-columns: 50px 72px;
}
.tools-reference {
    padding-left: 4px;
    grid-template-columns: 64px 48px;
}
.tools-basic {
    padding-left: 4px;
    grid-template-columns: 44px 42px 40px 40px 54px;
}
.tools-settings {
    grid-template-columns: 76px;
}
.tool {
    position: relative;
    display: flex;
    flex-direction: column;
    align-items: center;
    white-space: nowrap;
}
.tool svg {
    width: 32px;
    height: 32px;
    margin-bottom: 3px;
}
.tool > .caret {
    margin-top: 7px;
}
.tool > .caret.side {
    position: absolute;
    right: 2px;
    top: 50px;
}
.caret.inline {
    display: inline-block;
    margin-left: 3px;
    vertical-align: 2px;
}
.digit {
    font-size: 15px;
    font-weight: bold;
    fill: #d3222a;
}
.letter {
    font-size: 20px;
    font-weight: bold;
    fill: #2b8eae;
}
.ref {
    font-size: 8px;
    font-weight: bold;
    fill: #2b7fa8;
}
.group-name {
    height: 17px;
    text-align: center;
    color: #6b7176;
}
.with-launcher .group-name {
    padding-right: 12px;
}
.launcher {
    position: absolute;
    right: 6px;
    bottom: 5px;
}

/* Document tabs */
.doc-tabs {
    height: 26px;
    display: flex;
    align-items: flex-end;
    padding-left: 3px;
}
.doc-tab {
    height: 23px;
    width: 185px;
    display: flex;
    align-items: center;
    justify-content: center;
    gap: 9px;
    background: #fdfdfd;
    border: 1px solid #b4bcc3;
    border-bottom: none;
    color: #111;
    white-space: nowrap;
}
.doc-add, .doc-list {
    padding: 6px 8px;
}
.doc-list {
    margin-left: auto;
}

/* Canvas */
.canvas {
    position: relative;
    flex: 1;
    min-height: 0;
    margin: 0 1px;
    border: 1px solid #fff;
    background: #a0a0a0;
    overflow: hidden;
}
.shade {
    position: absolute;
    inset: 0;
    background: linear-gradient(to right, #000, transparent);
    mask-image: linear-gradient(to bottom, #000, transparent);
}
.drawing {
    position: absolute;
    width: 100%;
    height: 100%;
}
.dim {
    font-family: "Liberation Sans", sans-serif;
    font-size: 15px;
    fill: #a3651c;
}
.dia {
    font-size: 14px;
}
.axis {
    font-family: "Liberation Sans", sans-serif;
    font-size: 15px;
    text-anchor: middle;
}
.hint {
    position: absolute;
    left: 15px;
    top: 24px;
    margin: 0;
    font-size: 12px;
    line-height: 16px;
    color: #000;
}
.scale {
    position: absolute;
    left: 4px;
    bottom: 1px;
    font-size: 15px;
    line-height: 20px;
    color: #000;
}
.view-bar {
    position: absolute;
    left: 0;
    right: 0;
    top: 2px;
    height: 24px;
    display: flex;
    justify-content: center;
}
.view-bar button {
    width: 26px;
    display: flex;
    align-items: center;
    justify-content: center;
}
.view-bar .on {
    background: #ffe37a;
    border: 1px solid #eebf3c;
}
.view-gap {
    width: 76px;
}
.chev {
    width: 12px;
}
.chev::before {
    content: "";
    display: block;
    width: 4px;
    height: 4px;
    margin: 9px 0 0 2px;
    border: solid #ddd;
    border-width: 0 1px 1px 0;
    transform: rotate(45deg);
}

/* Offset form */
.panel {
    position: absolute;
    top: 0;
    right: 0;
    width: 275px;
    padding: 5px 6px 11px;
    background: #e4e7ec;
    border: 1px solid #777;
    outline: 1px solid #fff;
    outline-offset: -2px;
    color: #111;
}
.panel-title {
    display: flex;
    align-items: center;
    gap: 6px;
    height: 22px;
    padding-left: 2px;
}
.panel h2, .panel h3 {
    margin: 0;
    font-size: 11px;
    font-weight: 600;
    color: #333;
}
.panel-title button {
    margin-left: auto;
    margin-right: 6px;
}
.panel-actions {
    display: flex;
    gap: 4px;
    height: 26px;
    margin: 5px 0 6px -2px;
}
.act {
    width: 30px;
    display: flex;
    align-items: center;
    justify-content: center;
    background: #fff;
    border: 1px solid #c0c6cc;
}
.act.ok {
    border: 2px solid #e3b33c;
}
.act.info {
    margin-left: auto;
}
.act.narrow {
    width: 12px;
}
.block {
    border: 1px solid #b7bec7;
    outline: 1px solid #f7f9fb;
    background: #dce1e9;
    margin-bottom: 3px;
}
.block h3 {
    display: flex;
    align-items: center;
    gap: 7px;
    height: 23px;
    padding-left: 5px;
    background: #fcfcfd;
    border-bottom: 1px solid #b7bec7;
}
.block h3::before {
    content: "";
    border: 4px solid transparent;
    border-top: 7px solid #50565c;
    border-bottom: none;
}
.fields {
    display: flex;
    flex-direction: column;
    gap: 4px;
    padding: 5px 0 1px 8px;
}
.fields.tight {
    gap: 3px;
    padding-top: 2px;
}
.row {
    display: flex;
    align-items: center;
    height: 22px;
}
.row label {
    width: 84px;
}
.row .indent {
    padding-left: 5px;
}
.row input {
    min-width: 0;
    border: none;
    padding: 0 3px;
    background: none;
}
.row .long {
    width: 133px;
    height: 20px;
    background: #fff;
    border: 1px solid #c0c6cc;
}
.more {
    margin-left: 7px;
}
.spin {
    display: flex;
    align-items: center;
    width: 121px;
    height: 22px;
    padding-right: 5px;
    background: #fff;
    border: 1px solid #c0c6cc;
}
.spin input {
    flex: 1;
}
.arrows {
    display: flex;
    flex-direction: column;
    gap: 5px;
    margin-left: 8px;
}
.arrows::before, .arrows::after {
    content: "";
    border: 3px solid transparent;
}
.arrows::before {
    border-top: none;
    border-bottom-color: #333;
}
.arrows::after {
    border-bottom: none;
    border-top-color: #333;
}
.down {
    display: flex;
    align-items: center;
    gap: 6px;
    margin-left: 6px;
    color: #b4b8bc;
}
.green {
    color: #4cc063;
}
.yellow {
    color: #c9a93a;
}
.checks label {
    display: flex;
    align-items: center;
    gap: 5px;
    height: 22px;
}
.checks input {
    appearance: none;
    width: 13px;
    height: 13px;
    margin: 0 0 2px;
    background: #f3f4f5;
    border: 1px solid #8b9096;
}
.checks input:checked::before {
    content: "";
    display: block;
    width: 5px;
    height: 8px;
    margin: 0 0 0 3px;
    border: solid #55595e;
    border-width: 0 2px 2px 0;
    transform: rotate(40deg);
}
.off {
    color: #868b90;
}
.off .spin {
    background: #eceef1;
}
.off .checks input, .off input, .off .caret, .off .arrows {
    opacity: .6;
}

/* Status bar */
.status {
    height: 28px;
    display: flex;
    align-items: center;
    justify-content: space-between;
    padding: 2px 1px 1px 7px;
    border-top: 1px solid #c3c9ce;
    color: #333;
}
.status-tools {
    display: flex;
    align-items: center;
    gap: 14px;
    height: 25px;
    padding-left: 11px;
    border-left: 1px solid #7d8288;
}
.status-tools input {
    width: 350px;
    height: 21px;
    margin-left: -4px;
    background: #fff;
    border: 1px solid #b4bcc3;
}
```
